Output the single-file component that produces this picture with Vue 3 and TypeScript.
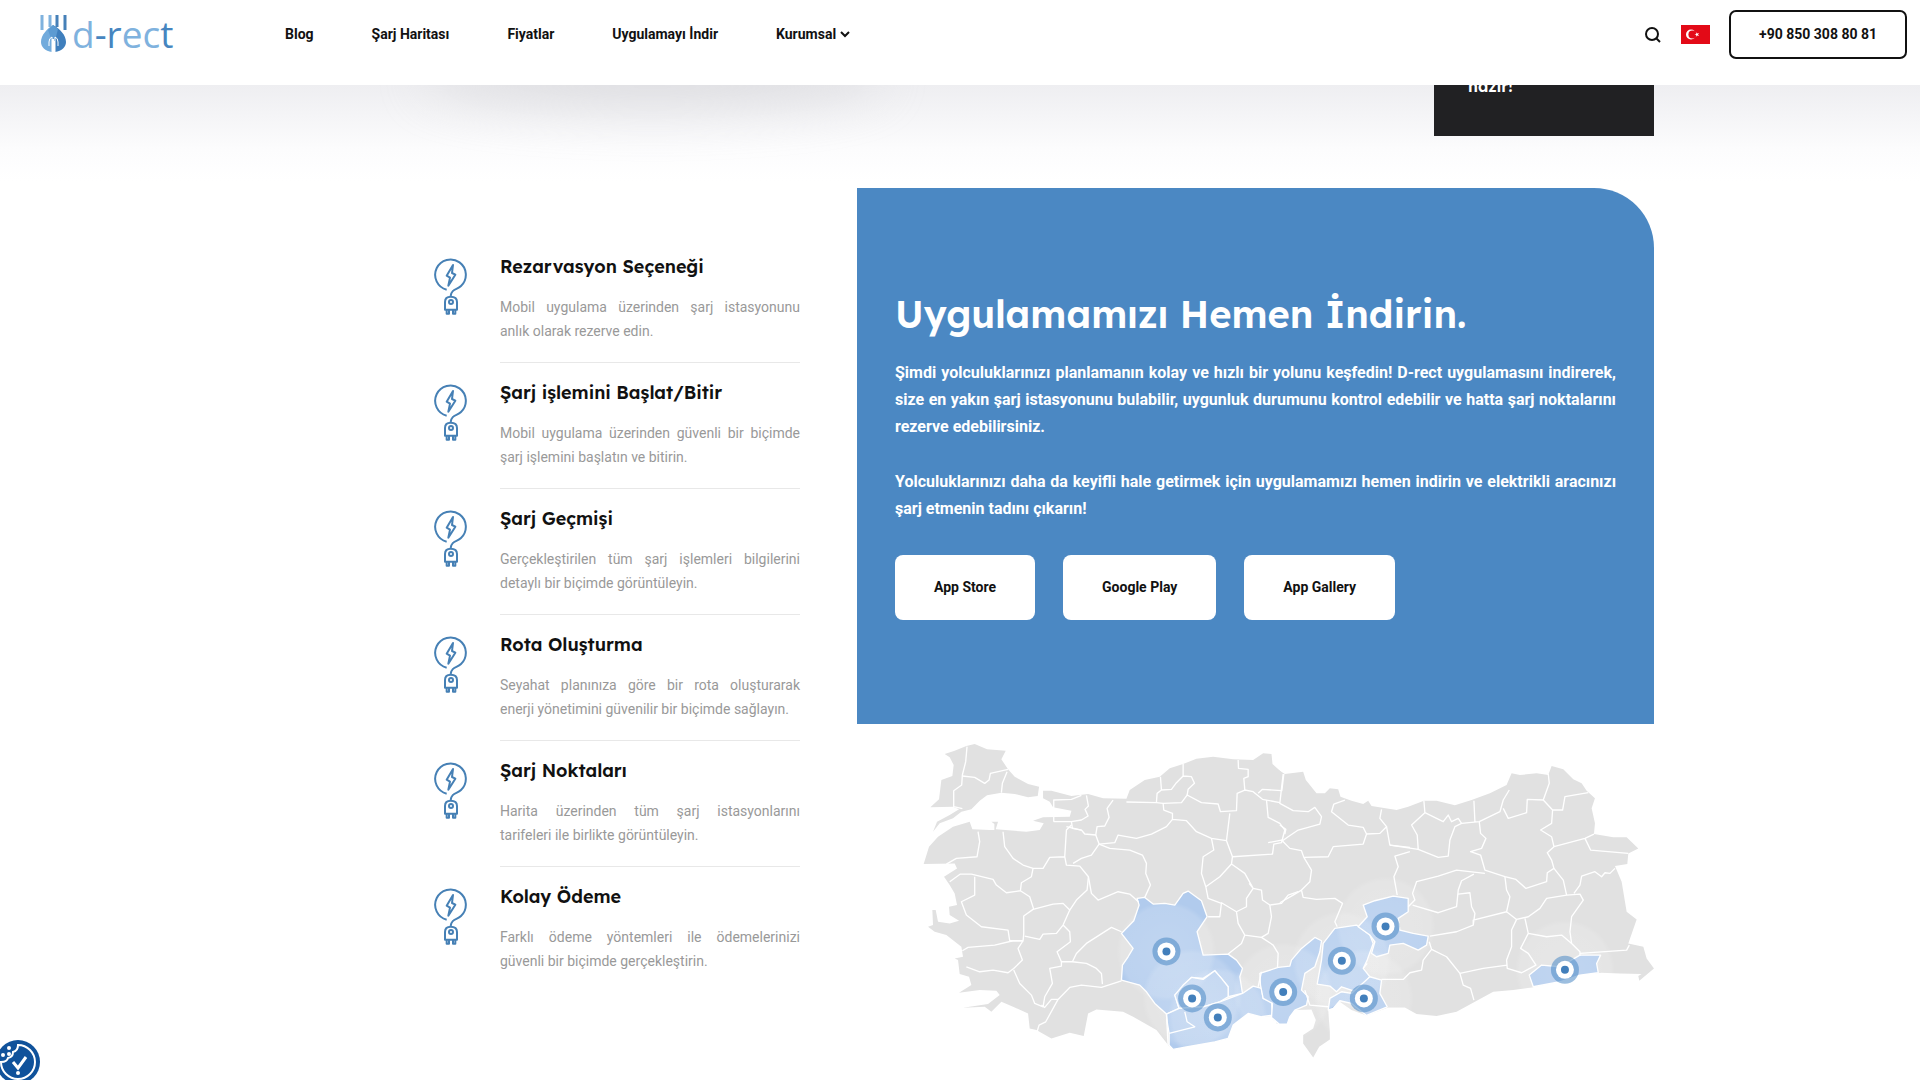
<script setup lang="ts">
interface Feature {
  title: string
  text: string
}

interface Pin {
  x: number
  y: number
}

const links: string[] = ['Blog', 'Şarj Haritası', 'Fiyatlar', 'Uygulamayı İndir']

const features: Feature[] = [
  { title: 'Rezarvasyon Seçeneği', text: 'Mobil uygulama üzerinden şarj istasyonunu anlık olarak rezerve edin.' },
  { title: 'Şarj işlemini Başlat/Bitir', text: 'Mobil uygulama üzerinden güvenli bir biçimde şarj işlemini başlatın ve bitirin.' },
  { title: 'Şarj Geçmişi', text: 'Gerçekleştirilen tüm şarj işlemleri bilgilerini detaylı bir biçimde görüntüleyin.' },
  { title: 'Rota Oluşturma', text: 'Seyahat planınıza göre bir rota oluşturarak enerji\u00a0yönetimini güvenilir bir biçimde sağlayın.' },
  { title: 'Şarj Noktaları', text: 'Harita üzerinden tüm şarj istasyonlarını tarifeleri\u00a0ile birlikte görüntüleyin.' },
  { title: 'Kolay Ödeme', text: 'Farklı ödeme yöntemleri ile ödemelerinizi güvenli bir biçimde gerçekleştirin.' },
]

const stores: string[] = ['App Store', 'Google Play', 'App Gallery']

const landWest =
  'M430 182L455 182L515 198L565 192L610 205L680 206L690 180L735 150L780 140L810 115L850 102L890 86L940 80L1000 88L1060 90L1090 70L1115 72L1118 102L1142 124L1160 140L1160 880L1120 870L1115 858L1085 860L1045 850L1000 885L985 925L945 935L860 950L820 958L805 945L770 900L700 860L670 845L590 838L565 850L552 918L510 908L455 925L410 900L390 895L385 850L340 830L305 815L275 845L255 830L190 833L265 822L300 795L290 782L240 780L178 788L215 765L208 740L180 732L175 690L165 685L190 680L185 650L140 615L105 605L85 590L100 585L98 540L108 540L115 575L150 580L178 572L150 555L148 530L172 525L165 490L150 465L133 440L172 415L165 400L72 402L88 350L115 320L160 290L210 275L218 298L270 300L284 300L284 282L275 275L295 275L288 298L380 305L420 300L432 280L400 272L430 262L510 260L515 242L460 232L450 215L430 205Z'

const landThrace =
  'M135 72L165 62L200 48L225 42L262 58L318 62L305 88L325 118L345 140L385 162L418 170L414 198L385 202L345 192L305 188L262 196L240 212L215 238L185 245L160 265L120 280L100 305L112 275L150 255L178 238L160 230L92 232L118 208L125 150L158 138L162 105L150 82Z'

const landEast =
  'M-10 116L15 132L70 125L78 150L110 190L135 190L150 175L175 178L182 200L215 212L250 222L265 212L275 228L350 240L385 230L432 212L470 212L525 226L575 210L630 190L680 165L695 130L720 135L770 130L805 135L815 108L850 118L880 148L905 160L920 182L945 205L935 235L945 280L942 312L1000 322L1040 322L1075 355L1045 370L1042 402L1005 408L1025 455L1040 545L1070 568L1045 640L1090 650L1100 685L1122 715L1078 752L1075 738L1085 732L1020 730L965 728L900 735L840 755L755 772L700 780L640 785L585 815L530 845L470 858L410 852L375 832L325 832L260 856L215 840L180 815L145 840L150 905L150 928L118 950L100 982L70 940L70 915L100 895L108 870L95 838L45 840L30 860L22 882L-10 880Z'

const activeWest: string[] = [
  'M712 505L735 502L760 522L795 520L825 525L850 490L865 483L905 512L922 560L892 605L910 675L985 672L1010 690L1028 715L1020 740L1028 790L985 800L985 770L945 722L910 745L875 742L825 795L838 835L800 852L765 820L740 785L720 765L665 750L668 705L685 680L700 655L665 610L702 572L718 525Z',
  'M825 795L850 765L875 742L910 748L945 722L965 745L985 770L985 800L960 815L910 830L838 835Z',
  'M800 852L838 835L910 830L960 815L1028 790L1060 768L1085 775L1090 805L1115 815L1118 855L1085 860L1045 850L1000 885L985 925L945 935L860 950L820 958L808 945L808 910L803 880Z',
]

const activeEast: string[] = [
  'M-60 730L-5 712L30 708L35 690L65 655L105 622L125 632L120 665L105 710L75 730L65 780L85 800L80 825L45 840L30 860L22 882L-2 882L-25 862L-22 820L-50 805L-58 765Z',
  'M130 640L165 595L230 585L270 615L280 640L262 690L250 715L270 740L230 785L185 770L170 785L150 768L112 762L125 690Z',
  'M145 840L150 805L185 785L215 790L270 740L305 750L300 790L322 830L260 856L215 820L180 812L160 835Z',
  'M235 590L262 560L250 525L285 512L340 498L385 505L385 545L355 565L360 600L400 610L445 618L440 645L415 660L370 640L330 645L325 670L290 680L275 670L285 635L270 615Z',
  'M748 735L785 705L840 710L900 675L962 675L950 700L955 728L900 735L840 755L760 770Z',
]

const bordersWest: string[] = [
  'M202 50L198 95L188 135L186 165L162 182L162 230L188 236',
  'M188 138L225 142L255 160L268 150L272 130L325 118M322 125L308 160L305 188',
  'M560 196L566 228L556 238L565 258L545 270L515 275L518 295L545 300L555 312L588 315L592 290L615 288L628 262L622 235L640 210M462 275L462 210L515 208L545 196M462 275L515 275',
  'M680 216L770 218L790 220L845 218L862 195L905 218L955 222L962 245L1010 242L1012 190L1035 180L1060 185L1088 208L1140 218',
  'M782 140L785 180L772 190L770 216M785 180L815 178L830 158L850 138L850 102M850 138L875 140L884 160L865 178L862 195M1015 90L1016 115L1045 118L1045 140L1032 145L1035 180',
  'M1152 132L1146 182L1088 178L1075 190',
  'M790 220L792 240L818 250L818 268L800 290L755 312L710 325L655 315L645 338L598 342L588 315M818 268L860 272L890 305L935 325L980 332L990 250M980 332L998 380L1118 372L1122 342L1145 338L1155 300L1140 280L1105 262L1100 210',
  'M235 305L240 335L232 380L170 385L140 402M310 305L315 350L340 385L370 405L400 415L395 440L365 458L362 482L320 488L290 465L280 448L215 432L182 432L150 455M400 415L430 415L450 382L495 380L500 300L515 285M495 380L500 405L540 408L566 440L562 480L530 510L510 540L490 520L460 522L400 538L372 558L372 612L370 632L330 632L325 600L245 590L200 555L185 515L225 495L225 440',
  'M362 482L390 500L402 538M520 400L545 385L575 375L598 342M545 300L500 290M598 342L630 355L690 360L728 375L740 400L738 430L752 465L735 502M566 440L575 490L595 510L655 485L690 492L716 515',
  'M510 540L490 585L470 610L430 612L420 628L375 618M490 585L510 605L512 635L472 665L485 695L518 695L530 670L560 640L635 592L665 605M518 695L560 700L590 715L605 730L608 762M370 632L340 632L285 645L205 652L188 662M370 632L355 655L368 690L342 715L325 728L280 720L240 725L200 710M342 720L360 760L395 795L405 820L430 830L435 800L458 760L450 715L485 708L485 695',
  'M412 905L418 885L438 875L475 808L510 772L545 765L605 772L665 752M475 808L455 808L435 832L425 825',
  'M935 325L942 360L910 380L905 430L918 470L960 440L995 402L998 380M995 402L1035 430L1060 475L1040 505L1040 530L1010 545L965 518L960 560L925 560M918 470L925 505L965 520M1060 475L1085 480L1088 510L1110 525L1115 560L1105 610L1085 622L1035 615L1015 580L1010 545M1110 525L1145 520L1165 495L1195 485M1060 475L1048 460',
  'M1035 615L1025 640L985 672M1085 622L1120 645L1135 670L1133 712M1085 725L1075 770',
  'M800 852L805 945M808 910L885 890L862 875L855 845',
]

const bordersEast: string[] = [
  'M10 132L5 175L0 220L40 242L85 245L105 232L125 260L120 282L55 300L25 320L8 332M-35 338L5 330L30 355L65 362L72 382L145 380L160 350L250 342L260 312L300 310L320 290L300 265L305 238M0 285L18 298L15 312M260 312L250 292L205 285L155 245L162 222L195 210',
  'M72 382L95 420L90 455L65 480L70 502L110 508L165 505L188 520L165 575L172 590M65 480L40 495L0 518',
  'M320 290L330 345L415 358L475 382L505 378L510 330L525 290L545 280L598 275L660 245L670 210L688 180M415 358L412 315L395 285L435 248L432 212M435 248L490 275L505 255L515 275L535 265L545 280M585 275L582 212',
  'M598 275L602 310L618 325L605 355L572 365L602 375L615 420L675 440L708 448L738 475L800 455L802 428L822 415L815 390L802 368L822 350L815 320L782 300L815 280L818 240L790 210L742 208L740 248L685 265L670 235M790 210L808 160L805 132M818 240L848 240L855 200L925 188M822 350L915 325L942 312M915 325L932 360L1045 370',
  'M390 365L345 378L355 410L342 440L352 495M330 345L390 352M385 530L405 510L398 490L410 455L475 438L530 420L615 430M398 525L475 548L530 530L535 480L545 452L582 432M535 492L570 488L575 530L585 550L580 585M675 440L680 480L690 500L680 545L580 570L580 585L530 605L450 618M822 415L850 450L860 495L900 492L910 510L875 560L870 605L875 640L900 665L900 678M860 495L800 505L780 535L745 560L710 568L680 545M1005 415L990 430L975 428L965 440L945 425L905 438L900 465L882 490',
  'M710 568L695 600L695 650L680 690L682 715L725 728L768 705L745 670L722 655L745 610L735 565M745 610L800 620L845 615L875 640M900 670L1040 660L1048 645M682 705L610 715L540 730L500 680L455 658L448 635M540 730L550 765L572 775L582 810M455 658L430 690L425 720L390 728L370 748L305 748M262 700L250 715M75 780L90 825L145 830',
]

const pins: Pin[] = [
  { x: 800, y: 664 },
  { x: 877, y: 805 },
  { x: 954, y: 862 },
  { x: 1150, y: 786 },
  { x: 1326, y: 692 },
  { x: 1457, y: 589 },
  { x: 1392, y: 805 },
  { x: 1995, y: 719 },
]
</script>

<template>
  <div class="page">
    <header class="header">
      <a class="logo" href="#" aria-label="d-rect">
        <svg width="28" height="38" viewBox="0 0 28 38" aria-hidden="true">
          <path d="M2 0V15M10 0V12" stroke="#7fb2de" stroke-width="3" />
          <path d="M17 0V12M25 0V15" stroke="#4680b8" stroke-width="3" />
          <path d="M13 10C7 14 1 20 1 27c0 5 4 9 11 10V25z" fill="#72abdc" />
          <path d="M13 10C20 14 26 20 26 27c0 5-4 9-11 10V25z" fill="#3f7fbd" />
          <path d="M13 10l5 4-3 12h-3L8 15z" fill="#5c9bd2" />
          <path d="M9 31v-4q0-4 3-5v15M18 31v-4q0-4-3-5v15" fill="none" stroke="#fff" stroke-width="1" />
          <path d="M13 24v14" stroke="#fff" stroke-width="2" />
        </svg>
        <span class="word">d<b>-r</b>ec<b>t</b></span>
      </a>
      <nav class="nav">
        <a v-for="link in links" :key="link" href="#">{{ link }}</a>
        <a href="#" class="more">Kurumsal
          <svg width="10" height="8" viewBox="0 0 10 8" aria-hidden="true">
            <path d="M1 2l4 4 4-4" fill="none" stroke="currentColor" stroke-width="2" />
          </svg>
        </a>
      </nav>
      <div class="tools">
        <button class="icon-button" type="button" aria-label="Ara">
          <svg width="18" height="18" viewBox="0 0 18 18" aria-hidden="true">
            <circle cx="8" cy="8" r="6" fill="none" stroke="currentColor" stroke-width="2" />
            <path d="M12 12l4 4" stroke="currentColor" stroke-width="2" />
          </svg>
        </button>
        <button class="icon-button" type="button" aria-label="Türkçe">
          <svg width="29" height="19" viewBox="0 0 29 19" aria-hidden="true">
            <rect width="29" height="19" fill="#e30a17" />
            <circle cx="10" cy="9.500" r="5" fill="#fff" />
            <circle cx="11.400" cy="9.500" r="4" fill="#e30a17" />
            <path d="M13.500 9.500l1.700-.6V7.200l1 1.400 1.800-.5-1 1.400 1 1.500-1.800-.6-1 1.400v-1.700z" fill="#fff" />
          </svg>
        </button>
        <a class="phone" href="tel:+908503088081">+90 850 308 80 81</a>
      </div>
    </header>

    <main class="content">
      <div class="hero-end">
        <p class="note">hazır!</p>
      </div>

      <div class="columns">
        <ul class="features">
          <li v-for="f in features" :key="f.title" class="feature">
            <svg class="feature-icon" width="35" height="58" viewBox="38 24 105 174" aria-hidden="true">
              <g fill="none" stroke="#4680b5" stroke-width="6" stroke-linejoin="round">
                <path d="M79 119A46 46 0 1 1 122 108C110 120 94 116 91 138" />
                <path d="M98 45L79 77L89 83L84 107L105 74L95 69Z" />
                <path d="M74 179V156Q74 140 91 140Q110 140 110 156V179Z" />
                <path d="M79 179V191H86V179M98 179V191H105V179" />
                <circle cx="92" cy="156" r="6" />
              </g>
            </svg>
            <div class="feature-body">
              <h3>{{ f.title }}</h3>
              <p>{{ f.text }}</p>
            </div>
          </li>
        </ul>

        <div class="side">
          <section class="promo">
            <h2>Uygulamamızı Hemen İndirin.</h2>
            <p>
              Şimdi yolculuklarınızı planlamanın kolay ve hızlı bir yolunu keşfedin! D-rect uygulamasını
              indirerek, size en yakın şarj istasyonunu bulabilir, uygunluk durumunu kontrol edebilir ve hatta
              şarj noktalarını rezerve edebilirsiniz.
            </p>
            <p>
              Yolculuklarınızı daha da keyifli hale getirmek için uygulamamızı hemen indirin ve elektrikli
              aracınızı şarj etmenin tadını çıkarın!
            </p>
            <div class="stores">
              <a v-for="store in stores" :key="store" href="#">{{ store }}</a>
            </div>
          </section>

          <svg class="map" viewBox="70 36 2192 950" role="img" aria-label="Şarj noktaları haritası">
            <defs>
              <clipPath id="land">
                <path :d="landWest" />
                <path :d="landEast" transform="translate(1140 0)" />
              </clipPath>
              <radialGradient id="halo">
                <stop offset="0" stop-color="#fff" stop-opacity="0.2" />
                <stop offset="0.900" stop-color="#fff" stop-opacity="0.14" />
                <stop offset="1" stop-color="#fff" stop-opacity="0" />
              </radialGradient>
            </defs>
            <g fill="#e1e1e1">
              <path :d="landThrace" />
              <path :d="landWest" />
              <path :d="landEast" transform="translate(1140 0)" />
            </g>
            <g class="active">
              <path v-for="d in activeWest" :key="d" :d="d" />
            </g>
            <g class="active" transform="translate(1140 0)">
              <path v-for="d in activeEast" :key="d" :d="d" />
            </g>
            <g clip-path="url(#land)">
              <circle v-for="(p, i) in pins" :key="i" :cx="p.x" :cy="p.y" r="150" fill="url(#halo)" />
            </g>
            <g class="border">
              <path v-for="d in bordersWest" :key="d" :d="d" />
            </g>
            <g class="border" transform="translate(1140 0)">
              <path v-for="d in bordersEast" :key="d" :d="d" />
            </g>
            <g v-for="(p, i) in pins" :key="i">
              <circle :cx="p.x" :cy="p.y" r="42" fill="#4b88c4" fill-opacity="0.550" />
              <circle :cx="p.x" :cy="p.y" r="27" fill="#fff" />
              <circle :cx="p.x" :cy="p.y" r="12" fill="#427fbb" />
            </g>
          </svg>
        </div>
      </div>
    </main>

    <button class="consent" type="button" aria-label="Çerez ayarları">
      <svg width="44" height="44" viewBox="0 0 44 44" aria-hidden="true">
        <circle cx="22" cy="22" r="22" fill="#10529b" />
        <path d="M22 5A17 17 0 1 1 5 22q6 0 7-4 5-1 5-6 5-1 5-7z" fill="none" stroke="#fff" stroke-width="2" />
        <circle cx="13" cy="8" r="2" fill="#fff" />
        <circle cx="7" cy="15" r="2" fill="#fff" />
        <circle cx="13" cy="14" r="2" fill="#fff" />
        <path d="M17 22l5 6 8-11" fill="none" stroke="#fff" stroke-width="3" />
        <circle cx="22" cy="33" r="2" fill="#fff" />
      </svg>
    </button>
  </div>
</template>

<style>
body {
  margin: 0;
  background: #fff;
}
</style>

<style scoped>
.page {
  min-height: 100vh;
  overflow: hidden;
  box-sizing: border-box;
  font-family: Roboto, 'Noto Sans', sans-serif;
  font-size: 14px;
  color: #111;
}

a {
  color: inherit;
  text-decoration: none;
}

button {
  border: 0;
  padding: 0;
  background: none;
  color: inherit;
  cursor: pointer;
}

svg {
  display: block;
}

.header {
  position: relative;
  z-index: 2;
  display: flex;
  align-items: flex-start;
  box-sizing: border-box;
  height: 85px;
  padding: 10px 13px 0 40px;
  background: #fff;
}

.logo {
  display: flex;
  align-items: center;
  gap: 4px;
  width: 245px;
  height: 48px;
}

.word {
  font-family: 'Open Sans', 'Noto Sans', sans-serif;
  font-size: 37px;
  line-height: 48px;
  color: #7fb2de;
}

.word b {
  font-weight: 500;
  color: #4685c0;
}

.nav {
  display: flex;
  gap: 58px;
  line-height: 48px;
  font-weight: 700;
}

.more {
  display: flex;
  align-items: center;
  gap: 4px;
}

.tools {
  display: flex;
  align-items: center;
  gap: 19px;
  margin-left: auto;
}

.phone {
  box-sizing: border-box;
  height: 49px;
  padding: 0 28px;
  border: 2px solid #111;
  border-radius: 7px;
  font-weight: 700;
  line-height: 45px;
}

.content {
  position: relative;
  background: linear-gradient(#eeeef1, #f5f5f7 32px, #fcfcfd 64px, #fff 96px) no-repeat top / 100% 96px;
}

.content::before {
  content: '';
  position: absolute;
  top: -40px;
  left: 22%;
  width: 24%;
  height: 64px;
  border-radius: 50%;
  background: #d0d0d4;
  filter: blur(24px);
  opacity: 0.5;
}

.hero-end,
.columns {
  position: relative;
  max-width: 1388px;
  margin: 0 auto;
}

.hero-end {
  display: flex;
  justify-content: flex-end;
  height: 51px;
}

.note {
  box-sizing: border-box;
  width: 220px;
  height: 76px;
  margin: -25px 0 0;
  padding: 14px 34px;
  background: #212123;
  color: #fff;
  font: 600 16px/24px Lexend, Lato, sans-serif;
}

.columns {
  display: flex;
  align-items: flex-start;
  box-sizing: border-box;
  gap: 57px;
  padding-top: 52px;
}

.features {
  flex: 1;
  margin: 49px 0 0;
  padding: 0 0 0 167px;
  list-style: none;
}

.feature {
  display: flex;
  gap: 32px;
}

.feature-icon {
  flex: none;
  margin-top: 21px;
}

.feature-body {
  flex: 1;
  padding: 16px 0 19px;
  border-bottom: 1px solid #e8e8e8;
}

.feature:last-child .feature-body {
  border-bottom: 0;
}

.feature h3 {
  margin: 0 0 14px;
  font: 600 18px/28px Lexend, Inter, sans-serif;
}

.feature p {
  margin: 0;
  line-height: 24px;
  text-align: justify;
  color: #999;
}

.side {
  flex: none;
  width: 797px;
}

.promo {
  box-sizing: border-box;
  min-height: 536px;
  padding: 98px 38px 0;
  border-top-right-radius: 60px;
  background: #4b88c3;
  color: #fff;
}

.promo h2 {
  margin: 0 0 17px;
  font: 600 38px/56px Lexend, Inter, sans-serif;
}

.promo p {
  margin: 0 0 28px;
  font-size: 16px;
  font-weight: 700;
  line-height: 27px;
  text-align: justify;
}

.stores {
  display: flex;
  gap: 28px;
  margin-top: 33px;
}

.stores a {
  padding: 0 39px;
  border-radius: 8px;
  background: #fff;
  color: #111;
  font-weight: 700;
  line-height: 65px;
}

.map {
  width: 731px;
  margin: 18px 0 0 auto;
}

.active path {
  fill: #b1cbed;
  stroke: #fff;
  stroke-width: 4;
  stroke-linejoin: round;
}

.border path {
  fill: none;
  stroke: #fff;
  stroke-width: 4;
  stroke-linejoin: round;
}

.consent {
  position: fixed;
  left: -4px;
  bottom: -4px;
}
</style>
